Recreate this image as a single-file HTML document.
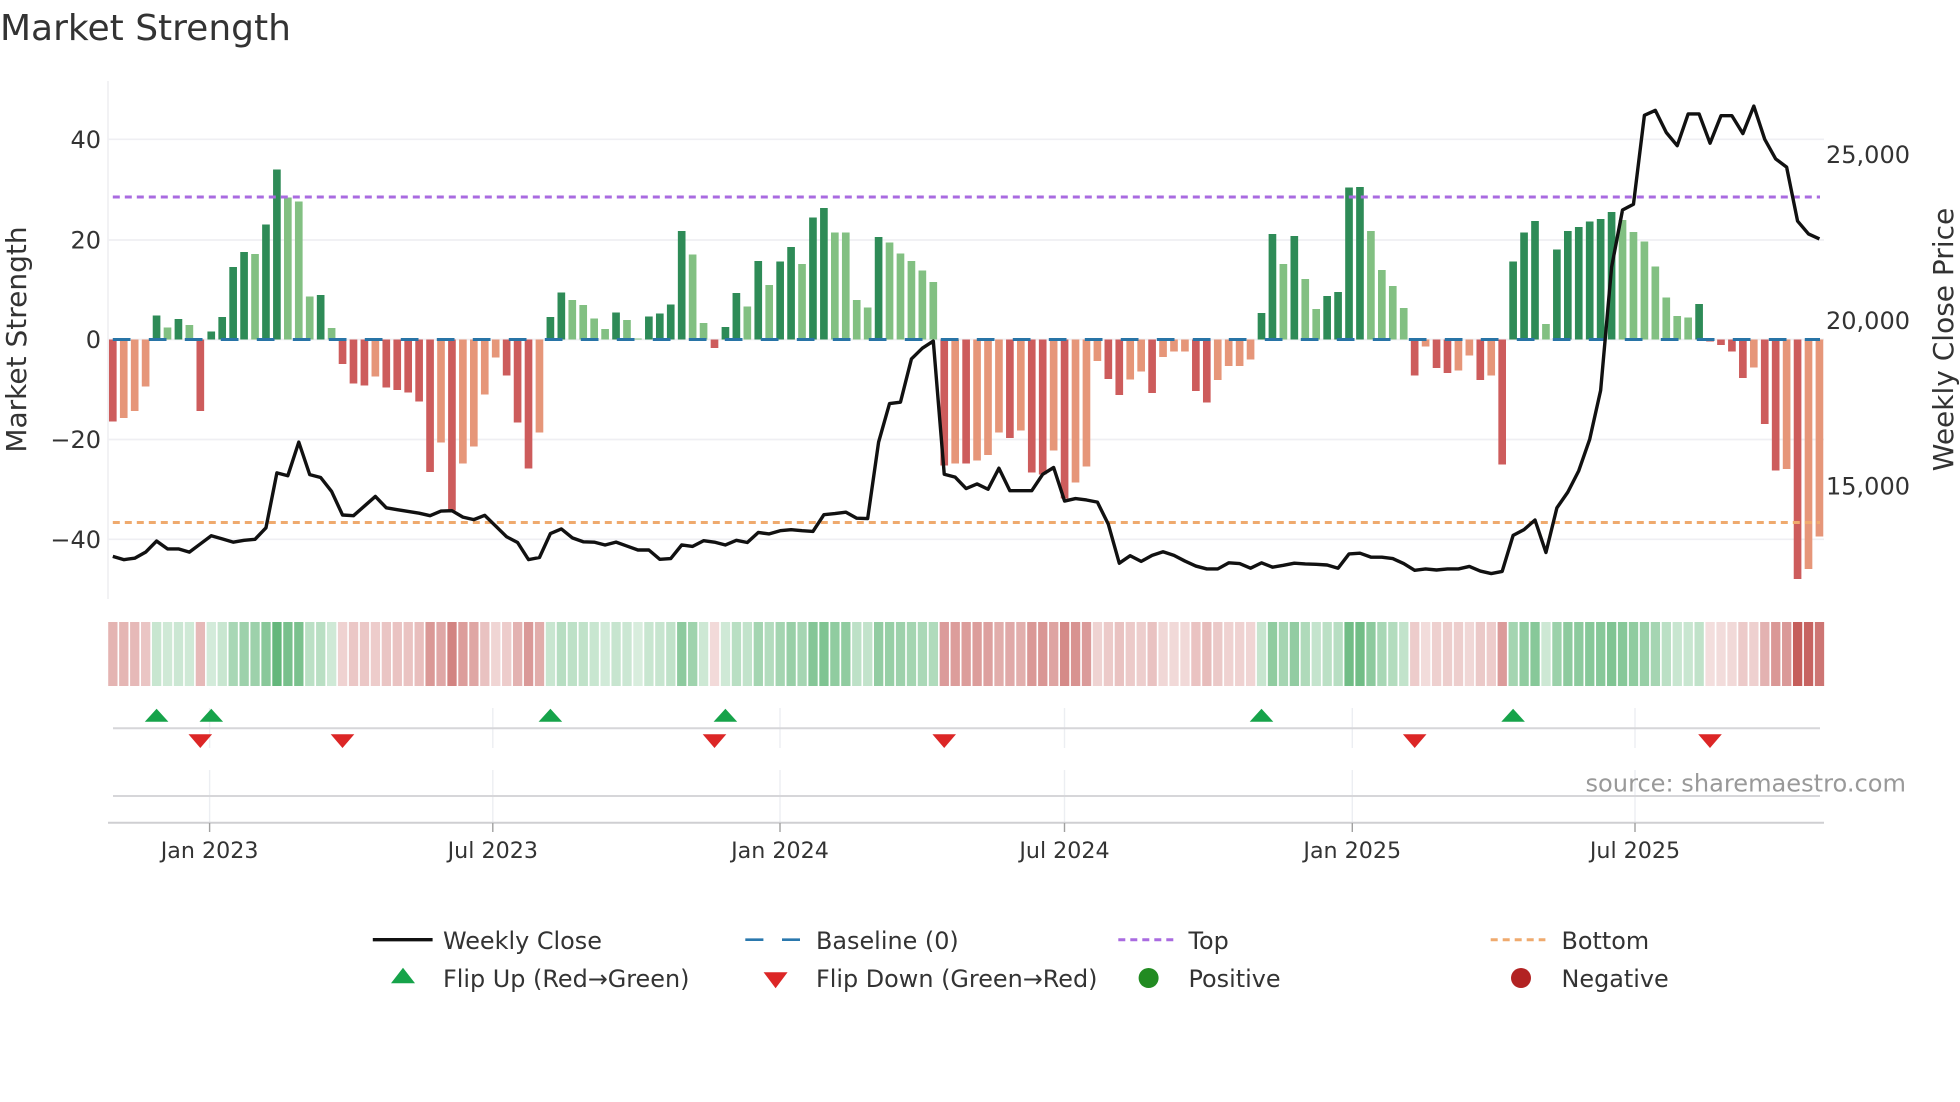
<!DOCTYPE html>
<html lang="en">
<head>
<meta charset="utf-8">
<title>Market Strength</title>
<style>
html,body{margin:0;padding:0;background:#fff;width:1960px;height:1102px;overflow:hidden}
svg{display:block;position:absolute;left:0;top:0}
text{font-family:"DejaVu Sans","Liberation Sans",sans-serif;fill:#333}
.h rect{width:.85px;height:1px}
.yt{font-size:24px;text-anchor:end}
.yr{font-size:24px}
.xt{font-size:22.2px;text-anchor:middle}
.lg{font-size:23.9px}
.at{font-size:28px;text-anchor:middle}
</style>
</head>
<body>
<svg width="1960" height="1102" viewBox="0 0 1960 1102" xmlns="http://www.w3.org/2000/svg">
<rect width="1960" height="1102" fill="#fff"/>

<text x="0" y="40" font-size="36">Market Strength</text>

<!-- main panel grid -->
<g stroke="#efeff3" stroke-width="1.7" fill="none">
<path d="M108 81V599"/>
<path d="M108 139.3H1824M108 240H1824M108 339.5H1824M108 439.5H1824M108 539.3H1824"/>
</g>

<!-- bars -->
<g transform="translate(112.8,339.5) scale(10.94,-5)">
<path fill="#cd5c5c" d="M-.35 0v-16.4h.7V0zM7.65 0v-14.3h.7V0zM20.65 0v-4.9h.7V0zM21.65 0v-8.8h.7V0zM22.65 0v-9.2h.7V0zM24.65 0v-9.6h.7V0zM25.65 0v-10.1h.7V0zM26.65 0v-10.6h.7V0zM27.65 0v-12.4h.7V0zM28.65 0v-26.5h.7V0zM30.65 0v-34.2h.7V0zM35.65 0v-7.2h.7V0zM36.65 0v-16.6h.7V0zM37.65 0v-25.8h.7V0zM54.65 0v-1.7h.7V0zM75.65 0v-25.2h.7V0zM77.65 0v-24.8h.7V0zM81.65 0v-19.7h.7V0zM83.65 0v-26.6h.7V0zM84.65 0v-27h.7V0zM86.65 0v-31.8h.7V0zM90.65 0v-7.9h.7V0zM91.65 0v-11.1h.7V0zM94.65 0v-10.7h.7V0zM98.65 0v-10.3h.7V0zM99.65 0v-12.6h.7V0zM118.65 0v-7.2h.7V0zM120.65 0v-5.7h.7V0zM121.65 0v-6.7h.7V0zM124.65 0v-8.1h.7V0zM126.65 0v-25h.7V0zM145.65 0v-.4h.7V0zM146.65 0v-1.1h.7V0zM147.65 0v-2.4h.7V0zM148.65 0v-7.7h.7V0zM150.65 0v-16.9h.7V0zM151.65 0v-26.2h.7V0zM153.65 0v-47.9h.7V0z"/>
<path fill="#e69679" d="M.65 0v-15.7h.7V0zM1.65 0v-14.3h.7V0zM2.65 0v-9.4h.7V0zM23.65 0v-7.4h.7V0zM29.65 0v-20.6h.7V0zM31.65 0v-24.8h.7V0zM32.65 0v-21.4h.7V0zM33.65 0v-11h.7V0zM34.65 0v-3.6h.7V0zM38.65 0v-18.6h.7V0zM76.65 0v-24.8h.7V0zM78.65 0v-24.2h.7V0zM79.65 0v-23.1h.7V0zM80.65 0v-18.6h.7V0zM82.65 0v-18.2h.7V0zM85.65 0v-22.2h.7V0zM87.65 0v-28.6h.7V0zM88.65 0v-25.4h.7V0zM89.65 0v-4.3h.7V0zM92.65 0v-8h.7V0zM93.65 0v-6.4h.7V0zM95.65 0v-3.5h.7V0zM96.65 0v-2.4h.7V0zM97.65 0v-2.4h.7V0zM100.65 0v-8.1h.7V0zM101.65 0v-5.3h.7V0zM102.65 0v-5.3h.7V0zM103.65 0v-4h.7V0zM119.65 0v-1.4h.7V0zM122.65 0v-6.2h.7V0zM123.65 0v-3.2h.7V0zM125.65 0v-7.2h.7V0zM149.65 0v-5.6h.7V0zM152.65 0v-25.9h.7V0zM154.65 0v-45.9h.7V0zM155.65 0v-39.4h.7V0z"/>
<path fill="#2e8b57" d="M3.65 0v4.8h.7V0zM5.65 0v4.1h.7V0zM8.65 0v1.6h.7V0zM9.65 0v4.5h.7V0zM10.65 0v14.5h.7V0zM11.65 0v17.5h.7V0zM13.65 0v23h.7V0zM14.65 0v34h.7V0zM18.65 0v8.9h.7V0zM39.65 0v4.5h.7V0zM40.65 0v9.4h.7V0zM45.65 0v5.4h.7V0zM48.65 0v4.6h.7V0zM49.65 0v5.2h.7V0zM50.65 0v7h.7V0zM51.65 0v21.7h.7V0zM55.65 0v2.5h.7V0zM56.65 0v9.3h.7V0zM58.65 0v15.7h.7V0zM60.65 0v15.6h.7V0zM61.65 0v18.5h.7V0zM63.65 0v24.4h.7V0zM64.65 0v26.3h.7V0zM69.65 0v20.5h.7V0zM104.65 0v5.3h.7V0zM105.65 0v21.1h.7V0zM107.65 0v20.7h.7V0zM110.65 0v8.7h.7V0zM111.65 0v9.5h.7V0zM112.65 0v30.4h.7V0zM113.65 0v30.5h.7V0zM127.65 0v15.6h.7V0zM128.65 0v21.4h.7V0zM129.65 0v23.7h.7V0zM131.65 0v18h.7V0zM132.65 0v21.7h.7V0zM133.65 0v22.5h.7V0zM134.65 0v23.6h.7V0zM135.65 0v24.1h.7V0zM136.65 0v25.5h.7V0zM144.65 0v7.1h.7V0z"/>
<path fill="#82c082" d="M4.65 0v2.4h.7V0zM6.65 0v2.9h.7V0zM12.65 0v17.1h.7V0zM15.65 0v28.4h.7V0zM16.65 0v27.6h.7V0zM17.65 0v8.6h.7V0zM19.65 0v2.3h.7V0zM41.65 0v7.9h.7V0zM42.65 0v6.9h.7V0zM43.65 0v4.2h.7V0zM44.65 0v2.1h.7V0zM46.65 0v3.9h.7V0zM47.65 0v.2h.7V0zM52.65 0v17h.7V0zM53.65 0v3.3h.7V0zM57.65 0v6.6h.7V0zM59.65 0v10.9h.7V0zM62.65 0v15.1h.7V0zM65.65 0v21.4h.7V0zM66.65 0v21.4h.7V0zM67.65 0v7.9h.7V0zM68.65 0v6.4h.7V0zM70.65 0v19.4h.7V0zM71.65 0v17.2h.7V0zM72.65 0v15.7h.7V0zM73.65 0v13.8h.7V0zM74.65 0v11.5h.7V0zM106.65 0v15.1h.7V0zM108.65 0v12.1h.7V0zM109.65 0v6.1h.7V0zM114.65 0v21.7h.7V0zM115.65 0v13.9h.7V0zM116.65 0v10.7h.7V0zM117.65 0v6.3h.7V0zM130.65 0v3.1h.7V0zM137.65 0v23.9h.7V0zM138.65 0v21.5h.7V0zM139.65 0v19.6h.7V0zM140.65 0v14.6h.7V0zM141.65 0v8.4h.7V0zM142.65 0v4.7h.7V0zM143.65 0v4.4h.7V0z"/>
</g>

<!-- reference lines -->
<path d="M112.8 339.5H1820" stroke="#2874a6" stroke-width="3" stroke-dasharray="17.7 18.3" fill="none"/>
<path d="M112.8 197H1820" stroke="#a96be0" stroke-width="3" stroke-dasharray="7 5" fill="none"/>
<path d="M112.8 522.5H1820" stroke="#efaa6e" stroke-width="3" stroke-dasharray="7 5" fill="none"/>

<!-- weekly close -->
<g transform="translate(112.8,60) scale(10.94,.35714)">
<polyline fill="none" stroke="#111" stroke-width="3.4" stroke-linejoin="round" vector-effect="non-scaling-stroke" style="vector-effect:non-scaling-stroke" points="0,1390 1,1399 2,1395 3,1378 4,1347 5,1369 6,1369 7,1378 8,1355 9,1332 10,1341 11,1350 12,1345 13,1342 14,1310 15,1156 16,1164 17,1070 18,1161 19,1169 20,1208 21,1274 22,1276 23,1249 24,1222 25,1254 26,1259 27,1264 28,1269 29,1276 30,1263 31,1262 32,1280 33,1287 34,1275 35,1305 36,1335 37,1351 38,1399 39,1393 40,1326 41,1313 42,1338 43,1349 44,1350 45,1358 46,1350 47,1361 48,1372 49,1372 50,1398 51,1396 52,1358 53,1362 54,1346 55,1350 56,1358 57,1345 58,1351 59,1323 60,1327 61,1318 62,1315 63,1318 64,1320 65,1273 66,1270 67,1266 68,1283 69,1284 70,1070 71,962 72,958 73,837 74,807 75,787 76,1160 77,1168 78,1200 79,1187 80,1202 81,1143 82,1206 83,1206 84,1206 85,1160 86,1141 87,1235 88,1228 89,1232 90,1238 91,1300 92,1409 93,1388 94,1404 95,1387 96,1377 97,1387 98,1403 99,1417 100,1425 101,1425 102,1408 103,1410 104,1423 105,1408 106,1420 107,1415 108,1409 109,1411 110,1412 111,1414 112,1423 113,1383 114,1381 115,1392 116,1392 117,1396 118,1410 119,1429 120,1425 121,1428 122,1425 123,1425 124,1418 125,1431 126,1438 127,1432 128,1331 129,1315 130,1288 131,1379 132,1254 133,1210 134,1150 135,1062 136,925 137,580 138,420 139,404 140,155 141,141 142,203 143,240 144,151 145,151 146,233 147,156 148,156 149,206 150,129 151,222 152,277 153,300 154,451 155,487 156,501"/>
</g>

<!-- y axis labels -->
<text class="yt" x="101" y="148">40</text>
<text class="yt" x="101" y="248.6">20</text>
<text class="yt" x="101" y="348.2">0</text>
<text class="yt" x="101" y="448.2">−20</text>
<text class="yt" x="101" y="548">−40</text>
<text class="yr" x="1826" y="163">25,000</text>
<text class="yr" x="1826" y="328.8">20,000</text>
<text class="yr" x="1826" y="494.5">15,000</text>
<text class="at" transform="translate(26,339.5) rotate(-90)">Market Strength</text>
<text class="at" transform="translate(1953,339.5) rotate(-90)">Weekly Close Price</text>

<!-- heat strip -->
<g class="h" transform="translate(112.8,622) scale(10.94,64)">
<g fill="#c0504d">
<rect x="-.42" opacity=".43"/><rect x=".58" opacity=".42"/><rect x="1.58" opacity=".4"/><rect x="2.58" opacity=".33"/>
<rect x="7.58" opacity=".4"/>
<rect x="20.58" opacity=".26"/><rect x="21.58" opacity=".32"/><rect x="22.58" opacity=".32"/><rect x="23.58" opacity=".29"/><rect x="24.58" opacity=".33"/><rect x="25.58" opacity=".34"/><rect x="26.58" opacity=".34"/><rect x="27.58" opacity=".37"/><rect x="28.58" opacity=".59"/><rect x="29.58" opacity=".5"/><rect x="30.58" opacity=".71"/><rect x="31.58" opacity=".56"/><rect x="32.58" opacity=".51"/><rect x="33.58" opacity=".35"/><rect x="34.58" opacity=".24"/><rect x="35.58" opacity=".29"/><rect x="36.58" opacity=".44"/><rect x="37.58" opacity=".58"/><rect x="38.58" opacity=".47"/>
<rect x="54.58" opacity=".21"/>
<rect x="75.58" opacity=".57"/><rect x="76.58" opacity=".56"/><rect x="77.58" opacity=".56"/><rect x="78.58" opacity=".56"/><rect x="79.58" opacity=".54"/><rect x="80.58" opacity=".47"/><rect x="81.58" opacity=".49"/><rect x="82.58" opacity=".46"/><rect x="83.58" opacity=".59"/><rect x="84.58" opacity=".6"/><rect x="85.58" opacity=".52"/><rect x="86.58" opacity=".67"/><rect x="87.58" opacity=".62"/><rect x="88.58" opacity=".57"/><rect x="89.58" opacity=".25"/><rect x="90.58" opacity=".3"/><rect x="91.58" opacity=".35"/><rect x="92.58" opacity=".3"/><rect x="93.58" opacity=".28"/><rect x="94.58" opacity=".35"/><rect x="95.58" opacity=".23"/><rect x="96.58" opacity=".22"/><rect x="97.58" opacity=".22"/><rect x="98.58" opacity=".34"/><rect x="99.58" opacity=".38"/><rect x="100.58" opacity=".31"/><rect x="101.58" opacity=".26"/><rect x="102.58" opacity=".26"/><rect x="103.58" opacity=".24"/>
<rect x="118.58" opacity=".29"/><rect x="119.58" opacity=".2"/><rect x="120.58" opacity=".27"/><rect x="121.58" opacity=".28"/><rect x="122.58" opacity=".28"/><rect x="123.58" opacity=".23"/><rect x="124.58" opacity=".31"/><rect x="125.58" opacity=".29"/><rect x="126.58" opacity=".57"/>
<rect x="145.58" opacity=".19"/><rect x="146.58" opacity=".2"/><rect x="147.58" opacity=".22"/><rect x="148.58" opacity=".3"/><rect x="149.58" opacity=".27"/><rect x="150.58" opacity=".44"/><rect x="151.58" opacity=".59"/><rect x="152.58" opacity=".58"/><rect x="153.58" opacity=".92"/><rect x="154.58" opacity=".89"/><rect x="155.58" opacity=".79"/>
</g>
<g fill="#259a45">
<rect x="3.58" opacity=".25"/><rect x="4.58" opacity=".22"/><rect x="5.58" opacity=".24"/><rect x="6.58" opacity=".22"/>
<rect x="8.58" opacity=".2"/><rect x="9.58" opacity=".25"/><rect x="10.58" opacity=".4"/><rect x="11.58" opacity=".45"/><rect x="12.58" opacity=".45"/><rect x="13.58" opacity=".54"/><rect x="14.58" opacity=".71"/><rect x="15.58" opacity=".62"/><rect x="16.58" opacity=".61"/><rect x="17.58" opacity=".31"/><rect x="18.58" opacity=".32"/><rect x="19.58" opacity=".22"/>
<rect x="39.58" opacity=".25"/><rect x="40.58" opacity=".33"/><rect x="41.58" opacity=".3"/><rect x="42.58" opacity=".29"/><rect x="43.58" opacity=".25"/><rect x="44.58" opacity=".21"/><rect x="45.58" opacity=".26"/><rect x="46.58" opacity=".24"/><rect x="47.58" opacity=".18"/><rect x="48.58" opacity=".25"/><rect x="49.58" opacity=".26"/><rect x="50.58" opacity=".29"/><rect x="51.58" opacity=".52"/><rect x="52.58" opacity=".44"/><rect x="53.58" opacity=".23"/>
<rect x="55.58" opacity=".22"/><rect x="56.58" opacity=".32"/><rect x="57.58" opacity=".28"/><rect x="58.58" opacity=".42"/><rect x="59.58" opacity=".35"/><rect x="60.58" opacity=".42"/><rect x="61.58" opacity=".47"/><rect x="62.58" opacity=".41"/><rect x="63.58" opacity=".56"/><rect x="64.58" opacity=".59"/><rect x="65.58" opacity=".51"/><rect x="66.58" opacity=".51"/><rect x="67.58" opacity=".3"/><rect x="68.58" opacity=".28"/><rect x="69.58" opacity=".5"/><rect x="70.58" opacity=".48"/><rect x="71.58" opacity=".45"/><rect x="72.58" opacity=".42"/><rect x="73.58" opacity=".39"/><rect x="74.58" opacity=".36"/>
<rect x="104.58" opacity=".26"/><rect x="105.58" opacity=".51"/><rect x="106.58" opacity=".41"/><rect x="107.58" opacity=".5"/><rect x="108.58" opacity=".37"/><rect x="109.58" opacity=".27"/><rect x="110.58" opacity=".31"/><rect x="111.58" opacity=".33"/><rect x="112.58" opacity=".65"/><rect x="113.58" opacity=".65"/><rect x="114.58" opacity=".52"/><rect x="115.58" opacity=".4"/><rect x="116.58" opacity=".35"/><rect x="117.58" opacity=".28"/>
<rect x="127.58" opacity=".42"/><rect x="128.58" opacity=".51"/><rect x="129.58" opacity=".55"/><rect x="130.58" opacity=".23"/><rect x="131.58" opacity=".46"/><rect x="132.58" opacity=".52"/><rect x="133.58" opacity=".53"/><rect x="134.58" opacity=".55"/><rect x="135.58" opacity=".55"/><rect x="136.58" opacity=".58"/><rect x="137.58" opacity=".55"/><rect x="138.58" opacity=".51"/><rect x="139.58" opacity=".48"/><rect x="140.58" opacity=".41"/><rect x="141.58" opacity=".31"/><rect x="142.58" opacity=".25"/><rect x="143.58" opacity=".25"/><rect x="144.58" opacity=".29"/>
</g>
</g>

<!-- lower panels -->
<g stroke="#eceef2" stroke-width="1.4" fill="none">
<path d="M209.6 708V748M209.6 770V822M492.8 708V748M492.8 770V822M780 708V748M780 770V822M1064.5 708V748M1064.5 770V822M1352.3 708V748M1352.3 770V822M1635 708V748M1635 770V822"/>
</g>
<path d="M113 728.3H1820M113 796H1820" stroke="#d6d6d9" stroke-width="2" fill="none"/>
<path d="M108 822.7H1824" stroke="#cfcfd2" stroke-width="2" fill="none"/>
<path d="M209.6 823V832M492.8 823V832M780 823V832M1064.5 823V832M1352.3 823V832M1635 823V832" stroke="#a0a0a0" stroke-width="1.4" fill="none"/>

<!-- flip markers -->
<g fill="#16a34a">
<path d="M156.6 708.7l11.8 13h-23.6z"/>
<path d="M211.3 708.7l11.8 13h-23.6z"/>
<path d="M550.4 708.7l11.8 13h-23.6z"/>
<path d="M725.4 708.7l11.8 13h-23.6z"/>
<path d="M1261.5 708.7l11.8 13h-23.6z"/>
<path d="M1513.1 708.7l11.8 13h-23.6z"/>
</g>
<g fill="#dc2626">
<path d="M200.3 748l-11.8 -13.7h23.6z"/>
<path d="M342.5 748l-11.8 -13.7h23.6z"/>
<path d="M714.5 748l-11.8 -13.7h23.6z"/>
<path d="M944.2 748l-11.8 -13.7h23.6z"/>
<path d="M1414.7 748l-11.8 -13.7h23.6z"/>
<path d="M1710 748l-11.8 -13.7h23.6z"/>
</g>

<text x="1585.5" y="791.7" font-size="24.1" style="fill:#999">source: sharemaestro.com</text>

<!-- x labels -->
<text class="xt" x="209.6" y="858">Jan 2023</text>
<text class="xt" x="492.8" y="858">Jul 2023</text>
<text class="xt" x="780" y="858">Jan 2024</text>
<text class="xt" x="1064.5" y="858">Jul 2024</text>
<text class="xt" x="1352.3" y="858">Jan 2025</text>
<text class="xt" x="1635" y="858">Jul 2025</text>

<!-- legend -->
<path d="M372.8 939.7H432.6" stroke="#111" stroke-width="3.4" fill="none"/>
<text class="lg" x="443" y="949">Weekly Close</text>
<path d="M745.3 939.7H763.4M782 939.7H800" stroke="#2a78ad" stroke-width="2.6" fill="none"/>
<text class="lg" x="816" y="949">Baseline (0)</text>
<path d="M1118.3 939.7H1173.4" stroke="#a96be0" stroke-width="3" stroke-dasharray="7 5" fill="none"/>
<text class="lg" x="1188.5" y="949">Top</text>
<path d="M1490.7 939.7H1545.4" stroke="#efaa6e" stroke-width="3" stroke-dasharray="7 5" fill="none"/>
<text class="lg" x="1561.5" y="949">Bottom</text>

<path d="M403 967.7l12 15.6h-24z" fill="#16a34a"/>
<text class="lg" x="443" y="987">Flip Up (Red→Green)</text>
<path d="M775.6 988.3l-12 -16h24z" fill="#dc2626"/>
<text class="lg" x="816" y="987">Flip Down (Green→Red)</text>
<circle cx="1148.6" cy="978" r="10" fill="#228b22"/>
<text class="lg" x="1188.5" y="987">Positive</text>
<circle cx="1521" cy="978" r="10" fill="#b22222"/>
<text class="lg" x="1561.5" y="987">Negative</text>
</svg>
</body>
</html>
